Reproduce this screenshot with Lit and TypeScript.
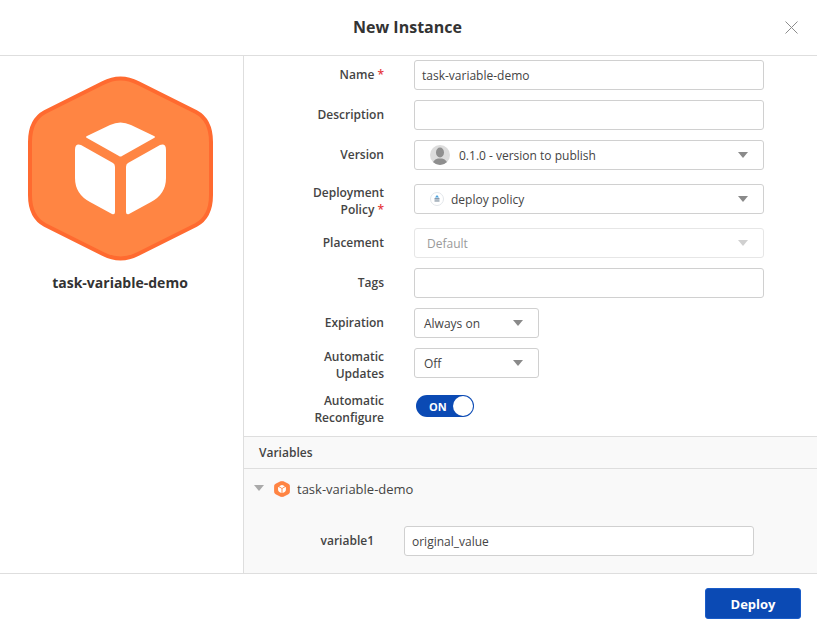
import { LitElement, html, svg, css } from 'lit';
import { customElement } from 'lit/decorators.js';

const hexIcon = (size: number) => html`
  <svg width=${size} height=${size} viewBox="0 0 185 185">
    <path
      d="M75 7 Q92.5 -2 110 7 L168 36 Q183 44 183 66 L183 119 Q183 141 168 149 L110 178 Q92.5 187 75 178 L17 149 Q2 141 2 119 L2 66 Q2 44 17 36 Z"
      fill="#ff8543"
      stroke="#ff6a30"
      stroke-width="4"
    />
    ${svg`
      <path fill="#fff" d="M59 60 L82 49 Q92.5 44 103 49 L126 60 Q128 61 126 62 L94 80 Q92.5 81 91 80 L59 62 Q57 61 59 60 Z" />
      <path fill="#fff" d="M53 69 L85 87 Q87 88 87 91 L87 136 Q87 139 84 138 L62 126 Q47 118 47 102 L47 74 Q47 67 53 69 Z" />
      <path fill="#fff" d="M132 69 L100 87 Q98 88 98 91 L98 136 Q98 139 101 138 L123 126 Q138 118 138 102 L138 74 Q138 67 132 69 Z" />
    `}
  </svg>
`;

const caret = html`<span class="caret"></span>`;

@customElement('app-root')
export class AppRoot extends LitElement {
  static override styles = css`
    :host {
      display: flex;
      flex-direction: column;
      width: 817px;
      height: 633px;
      overflow: hidden;
      background: #fff;
      font-family: 'Open Sans', sans-serif;
      font-size: 12px;
      color: #444;
    }

    .header {
      flex: none;
      height: 56px;
      box-sizing: border-box;
      display: flex;
      align-items: center;
      justify-content: center;
      position: relative;
      border-bottom: 1px solid #dedede;
      padding: 0 2px 2px 0;
      font-size: 16px;
      font-weight: 700;
      color: #333;
    }

    .close {
      position: absolute;
      right: 19px;
      top: 21px;
    }

    .body {
      flex: 1;
      min-height: 0;
      display: flex;
    }

    .side {
      flex: none;
      width: 244px;
      box-sizing: border-box;
      border-right: 1px solid #dedede;
      padding: 20px 0 0 28px;
      display: flex;
      flex-direction: column;
    }

    .side svg {
      display: block;
    }

    .side-name {
      width: 184px;
      margin-top: 12px;
      text-align: center;
      font-size: 14px;
      line-height: 20px;
      font-weight: 700;
      color: #333;
    }

    .main {
      flex: 1;
      min-width: 0;
      display: flex;
      flex-direction: column;
    }

    .form {
      flex: none;
      height: 380px;
      box-sizing: border-box;
      padding: 4px 0 0 10px;
      display: grid;
      grid-template-columns: 130px 350px;
      grid-template-rows: 40px 40px 44px 44px 40px 40px 40px 44px 30px;
      column-gap: 30px;
      align-content: start;
    }

    .label {
      height: 30px;
      box-sizing: border-box;
      padding-bottom: 2px;
      display: flex;
      align-items: center;
      justify-content: flex-end;
      text-align: right;
      font-weight: 600;
      line-height: 17px;
      color: #444;
    }

    .label.two {
      padding-top: 3px;
      padding-bottom: 0;
    }

    .req {
      color: #e5383b;
    }

    .field {
      box-sizing: border-box;
      height: 30px;
      border: 1px solid #d0d0d0;
      border-radius: 3px;
      background: #fff;
      display: flex;
      align-items: center;
      padding: 0 7px;
      color: #444;
      white-space: nowrap;
    }

    .field.disabled {
      border-color: #e6e6e6;
      color: #9a9a9a;
      padding-left: 12px;
    }

    .field.disabled .caret {
      border-top-color: #d0d0d0;
    }

    .field.small {
      width: 125px;
      padding-left: 9px;
    }

    .caret {
      margin-left: auto;
      margin-right: 8px;
      width: 0;
      height: 0;
      border-left: 5.5px solid transparent;
      border-right: 5.5px solid transparent;
      border-top: 6px solid #8a8a8a;
    }

    .avatar {
      margin: 0 9px 0 8px;
    }

    .policy {
      margin: 0 7px 0 8px;
    }

    .toggle {
      box-sizing: border-box;
      width: 58px;
      height: 22px;
      margin: 3px 0 0 2px;
      border-radius: 11px;
      background: #0b4ab4;
      display: flex;
      align-items: center;
      justify-content: space-between;
      padding: 0 1px 0 13px;
      color: #fff;
      font-size: 11px;
      font-weight: 700;
    }

    .knob {
      width: 20px;
      height: 20px;
      border-radius: 50%;
      background: #fff;
    }

    .vars {
      flex: 1;
      min-height: 0;
      background: #f9f9f9;
    }

    .vars-title {
      box-sizing: border-box;
      height: 33px;
      border-top: 1px solid #dedede;
      border-bottom: 1px solid #dedede;
      padding-left: 15px;
      display: flex;
      align-items: center;
      font-weight: 600;
      color: #444;
    }

    .tree {
      display: flex;
      align-items: center;
      height: 40px;
      padding-left: 10px;
      font-size: 13px;
      color: #444;
    }

    .tree-caret {
      width: 0;
      height: 0;
      margin-right: 10px;
      margin-bottom: 3px;
      border-left: 5px solid transparent;
      border-right: 5px solid transparent;
      border-top: 6px solid #aaa;
    }

    .tree svg {
      margin-right: 7px;
    }

    .var-row {
      margin-top: 17px;
      display: grid;
      grid-template-columns: 130px 350px;
      column-gap: 30px;
    }

    .footer {
      flex: none;
      height: 60px;
      box-sizing: border-box;
      border-top: 1px solid #dedede;
      display: flex;
      justify-content: flex-end;
      align-items: flex-start;
      padding: 14px 16px 0 0;
    }

    .deploy {
      width: 96px;
      height: 31px;
      border: 1px solid #1a5cc8;
      border-radius: 3px;
      background: #0b4ab4;
      color: #fff;
      font-family: inherit;
      font-size: 13px;
      font-weight: 700;
      padding: 0;
    }
  `;

  override render() {
    return html`
      <div class="header">
        New Instance
        <svg class="close" width="13" height="13" viewBox="0 0 13 13">
          <path d="M.5 .5 L12.5 12.5 M12.5 .5 L.5 12.5" stroke="#8c8c8c" stroke-width="1" fill="none" />
        </svg>
      </div>
      <div class="body">
        <div class="side">
          ${hexIcon(185)}
          <div class="side-name">task-variable-demo</div>
        </div>
        <div class="main">
          <div class="form">
            <div class="label"><span>Name <span class="req">*</span></span></div>
            <div class="field">task-variable-demo</div>

            <div class="label">Description</div>
            <div class="field"></div>

            <div class="label">Version</div>
            <div class="field">
              <svg class="avatar" width="20" height="20" viewBox="0 0 20 20">
                <defs>
                  <clipPath id="av"><circle cx="10" cy="10" r="10" /></clipPath>
                </defs>
                <circle cx="10" cy="10" r="10" fill="#dcdcdc" />
                <g clip-path="url(#av)" fill="#8f8f8f">
                  <ellipse cx="10" cy="7.5" rx="4" ry="5" />
                  <path d="M2 20 Q3 14.5 8 13.5 L12 13.5 Q17 14.5 18 20 Z" />
                </g>
              </svg>
              0.1.0 - version to publish ${caret}
            </div>

            <div class="label two"><span>Deployment<br />Policy <span class="req">*</span></span></div>
            <div class="field">
              <svg class="policy" width="14" height="14" viewBox="0 0 14 14">
                <circle cx="7" cy="7" r="6.5" fill="#fff" stroke="#e2e6ea" />
                <path d="M7 3 L9 5.4 L5 5.4 Z" fill="#4aa3df" />
                <rect x="4.5" y="6.2" width="5" height="1.3" fill="#6b8299" />
                <rect x="4.5" y="8.3" width="5" height="1.3" fill="#8b9aa8" />
              </svg>
              deploy policy ${caret}
            </div>

            <div class="label">Placement</div>
            <div class="field disabled">Default ${caret}</div>

            <div class="label">Tags</div>
            <div class="field"></div>

            <div class="label">Expiration</div>
            <div class="field small">Always on ${caret}</div>

            <div class="label two"><span>Automatic<br />Updates</span></div>
            <div class="field small">Off ${caret}</div>

            <div class="label two"><span>Automatic<br />Reconfigure</span></div>
            <div class="toggle">ON<span class="knob"></span></div>
          </div>
          <div class="vars">
            <div class="vars-title">Variables</div>
            <div class="tree">
              <span class="tree-caret"></span>
              ${hexIcon(16)} task-variable-demo
            </div>
            <div class="var-row">
              <div class="label">variable1</div>
              <div class="field">original_value</div>
            </div>
          </div>
        </div>
      </div>
      <div class="footer">
        <button class="deploy">Deploy</button>
      </div>
    `;
  }
}
